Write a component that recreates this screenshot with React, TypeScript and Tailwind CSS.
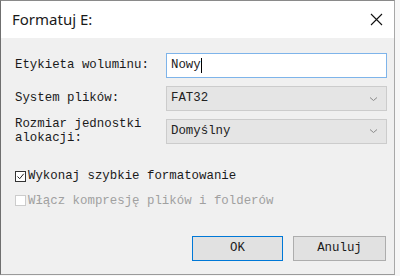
const mono = { fontFamily: '"Liberation Mono", "Noto Sans CJK SC", monospace' };

function Chevron() {
  return (
    <svg width="9" height="6" viewBox="0 0 9 6" fill="none" stroke="#8a8a8a" strokeWidth="1">
      <path d="M1 1.5 L4.5 4.5 L8 1.5" />
    </svg>
  );
}

function Combo({ value }: { value: string }) {
  return (
    <div className="flex h-[25px] w-[221px] items-center justify-between border border-[#cccccc] bg-[#e5e5e5] pl-[4px] pr-[8px] text-[12.4px] text-[#222]">
      <span>{value}</span>
      <Chevron />
    </div>
  );
}

function Check({ checked, disabled }: { checked?: boolean; disabled?: boolean }) {
  return (
    <span
      className={`flex h-[11px] w-[11px] items-center justify-center border bg-white ${
        disabled ? "border-[#cccccc]" : "border-[#333]"
      }`}
    >
      {checked && (
        <svg width="9" height="9" viewBox="0 0 9 9" fill="none" stroke="#222" strokeWidth="1">
          <path d="M1.5 4.5 L3.7 6.7 L7.7 1.8" />
        </svg>
      )}
    </span>
  );
}

export default function App() {
  return (
    <div className="h-[276px] w-[400px] bg-[#f7f7f7]">
      <div className="flex h-[275px] w-[395px] flex-col border-b border-l border-r border-t border-b-[#9a9a9a] border-l-[#6f6f6f] border-r-[#a8a8a8] border-t-[#8a8a8a]">
        {/* Title bar */}
        <div className="flex h-[37px] items-center justify-between bg-white pl-[11px] pr-[10px]">
          <span
            className="text-[15px] text-[#1a1a1a]"
            style={{ fontFamily: '"Noto Sans", "Open Sans", sans-serif' }}
          >
            Formatuj E:
          </span>
          <svg width="13" height="13" viewBox="0 0 13 13" stroke="#111" strokeWidth="1.1" className="mr-[1px]">
            <path d="M1 1 L12 12 M12 1 L1 12" />
          </svg>
        </div>

        {/* Body */}
        <div className="flex flex-1 flex-col bg-[#f0f0f0] pl-[14px] pt-[15px] text-[#1a1a1a]" style={mono}>
          <div className="flex items-center text-[12.4px]">
            <span className="w-[151px]">Etykieta woluminu:</span>
            <div className="flex h-[25px] w-[221px] items-center border border-[#7eb4ea] bg-white pl-[4px] text-[#222]">
              <span>Nowy</span>
              <span className="h-[15px] w-[1px] bg-black" />
            </div>
          </div>

          <div className="mt-[8px] flex items-center text-[12.4px]">
            <span className="w-[151px]">System plików:</span>
            <Combo value="FAT32" />
          </div>

          <div className="mt-[6px] flex items-center text-[12.4px]">
            <span className="w-[151px] leading-[14px]">
              Rozmiar jednostki
              <br />
              alokacji:
            </span>
            <Combo value="Domyślny" />
          </div>

          <div className="mt-[22px] flex items-center gap-[2px] text-[12.4px]">
            <Check checked />
            <span>Wykonaj szybkie formatowanie</span>
          </div>
          <div className="mt-[6px] flex items-center gap-[2px] text-[12.4px] text-[#a0a0a0]">
            <Check disabled />
            <span>Włącz kompresję plików i folderów</span>
          </div>

          <div className="mt-[26px] flex justify-end gap-[10px] pr-[8px] text-[12.4px]">
            <button className="h-[25px] w-[91px] border border-[#0078d7] bg-[#e1e1e1] text-[#1a1a1a]" style={mono}>
              OK
            </button>
            <button className="h-[25px] w-[93px] border border-[#adadad] bg-[#e1e1e1] text-[#1a1a1a]" style={mono}>
              Anuluj
            </button>
          </div>
        </div>
      </div>
    </div>
  );
}
